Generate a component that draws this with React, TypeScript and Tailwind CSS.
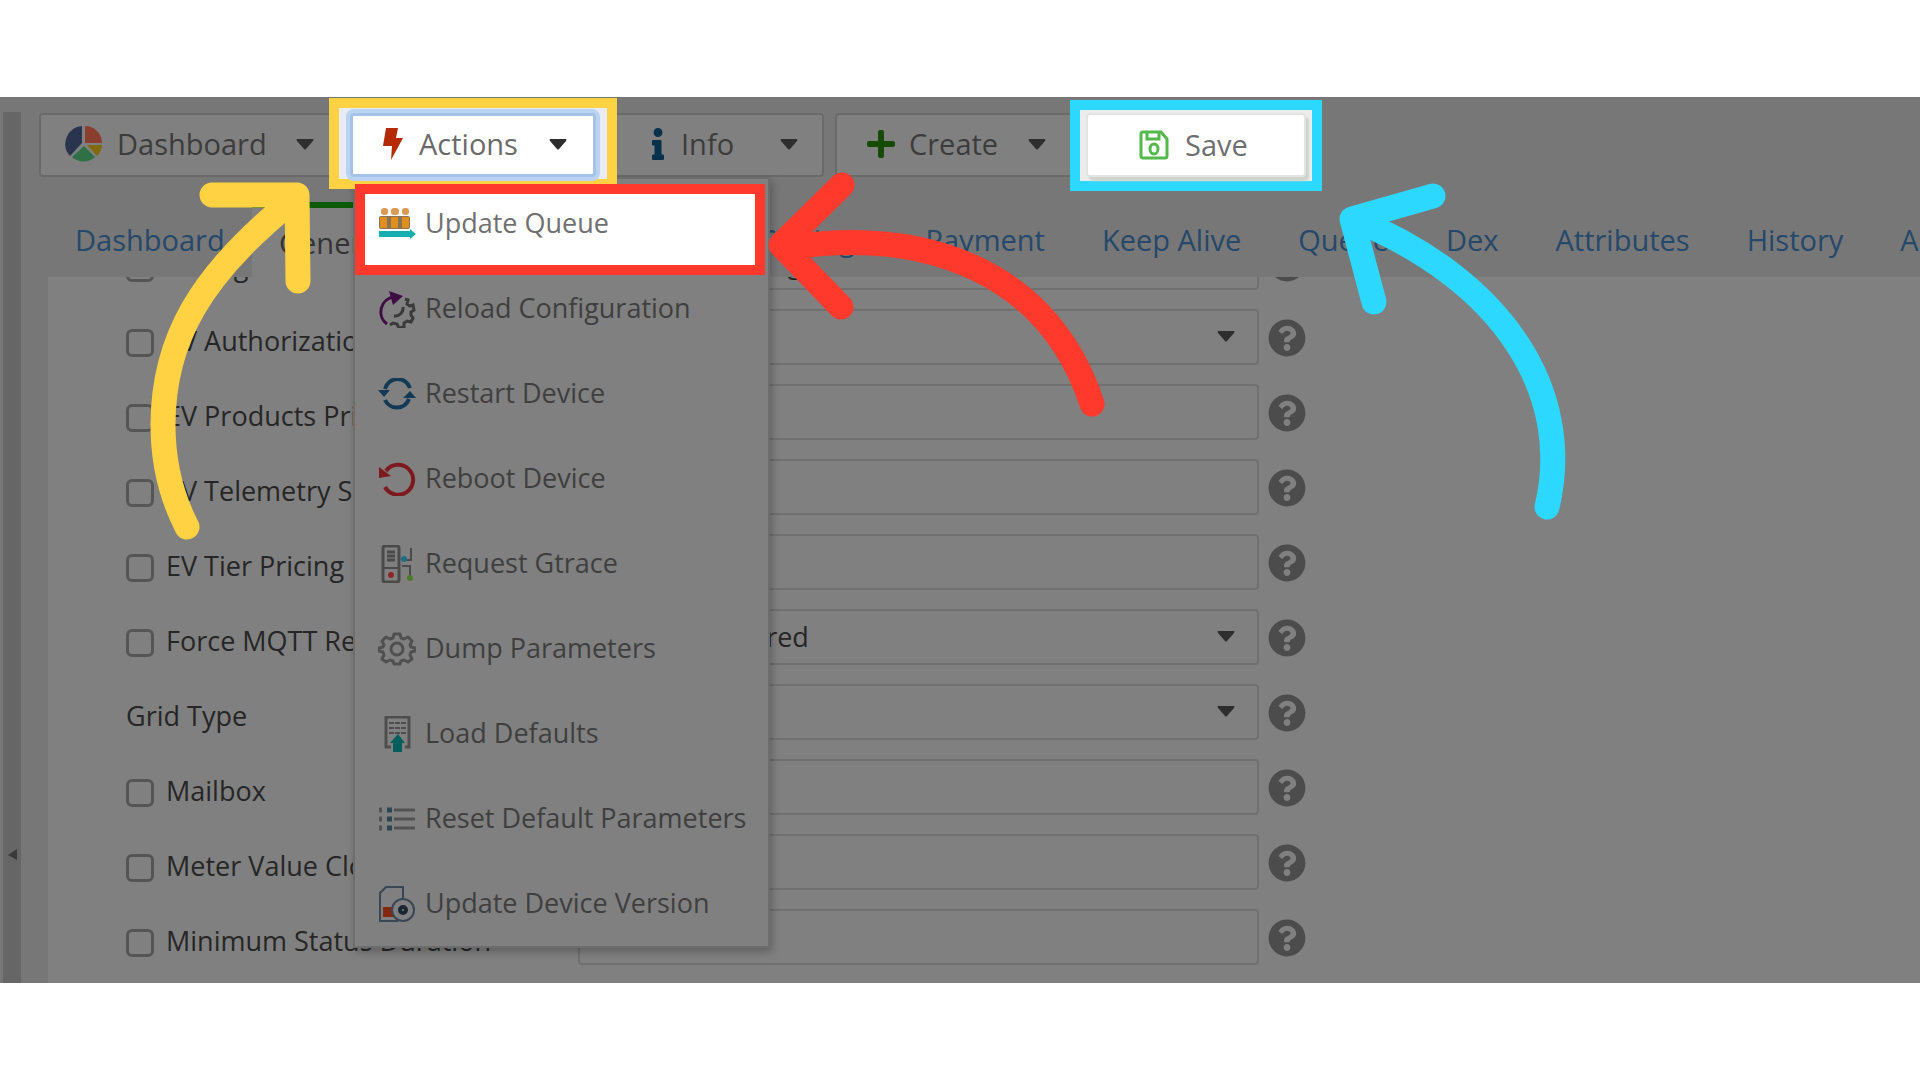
import React from 'react';
import { FaInfo, FaPlus, FaQuestionCircle } from 'react-icons/fa';

interface MenuEntry {
  label: string;
  icon: React.ReactNode;
}

interface Field {
  id: string;
  label: string;
  type: 'text' | 'select';
  checkbox: boolean;
  value?: string;
}

const PieIcon = () => (
  <svg viewBox="0 0 38 36" className="w-[38px] h-9">
    <path d="M17 0v17L5 30A18 18 0 0 1 17 0Z" fill="#2b344f" />
    <path d="M20 0a17 17 0 0 1 17 17H20Z" fill="#8a3f2e" />
    <path d="M22 19h15a16 16 0 0 1-5 11Z" fill="#80690f" />
    <path d="M19 20 30 31a17 17 0 0 1-23 0Z" fill="#2f7046" />
  </svg>
);

const BoltIcon = () => (
  <svg viewBox="0 0 20 32" className="w-5 h-8">
    <path d="M3 0h12l-2 10h7L8 32l1-14H0Z" fill="#b52a00" />
  </svg>
);

const SaveIcon = () => (
  <svg viewBox="0 0 30 30" className="w-[30px] h-[30px]" fill="none" stroke="#53b94a" strokeWidth="3">
    <path d="M2 4a2 2 0 0 1 2-2h18l6 7v17a2 2 0 0 1-2 2H4a2 2 0 0 1-2-2Z" />
    <path d="M8 2v7h12V2" />
    <ellipse cx="15" cy="19" rx="4" ry="5" />
  </svg>
);

const QueueIcon = () => (
  <svg viewBox="0 0 38 32" className="w-[38px] h-8">
    <g fill="#d99a55">
      <rect x="3" y="0" width="7" height="7" rx="3" />
      <rect x="13" y="0" width="8" height="7" rx="3" />
      <rect x="24" y="0" width="7" height="7" rx="3" />
    </g>
    <rect x="1" y="8" width="31" height="13" rx="2" fill="#8a7355" />
    <g fill="#e08e1f">
      <rect x="2" y="9" width="7" height="11" rx="1" />
      <rect x="13" y="9" width="7" height="11" rx="1" />
      <rect x="24" y="9" width="7" height="11" rx="1" />
    </g>
    <path d="M1 23h31v-2l6 5-6 5v-2H1Z" fill="#17aeb0" />
  </svg>
);

const ReloadIcon = () => (
  <svg viewBox="0 0 38 38" className="w-[38px] h-[38px]" fill="none">
    <path d="M9 34A15 15 0 0 1 16 7" stroke="#3f0d44" strokeWidth="3" />
    <path d="M11 1 25 6 15 15Z" fill="#3f0d44" />
    <path
      d="m27 9 3 1-1 4 3 2 3-1 1 5-3 2v3l2 3-2 4-4-1-3 2v4l-5 1-2-4-4-1-3 2"
      stroke="#3a3a3a"
      strokeWidth="3"
    />
    <path d="M25 17a8 8 0 0 1-9 9" stroke="#3a3a3a" strokeWidth="3" />
  </svg>
);

const RestartIcon = () => (
  <svg viewBox="0 0 38 32" className="w-[38px] h-8" fill="none">
    <path d="M7 11A13 13 0 0 1 32 10M31 21A13 13 0 0 1 7 22" stroke="#123a55" strokeWidth="4" />
    <path d="M0 12h12l-6 7ZM25 20h13l-6-7Z" fill="#123a55" />
  </svg>
);

const RebootIcon = () => (
  <svg viewBox="0 0 38 34" className="w-[38px] h-[34px]" fill="none">
    <path d="M8 9A15 15 0 1 1 7 25" stroke="#7d1a20" strokeWidth="4" />
    <path d="M1 5v11l12-2Z" fill="#7d1a20" />
  </svg>
);

const TraceIcon = () => (
  <svg viewBox="0 0 38 38" className="w-[38px] h-[38px]" fill="none" stroke="#4a4a4a" strokeWidth="2">
    <rect x="5" y="1" width="16" height="36" rx="2" strokeWidth="3" />
    <path d="M9 7h8M9 11h8M9 15h8" strokeWidth="3" />
    <path d="M6 23h14M33 3v12h-7M24 21h8v10" />
    <circle cx="13" cy="30" r="3" fill="#8e2727" stroke="none" />
    <circle cx="26" cy="14" r="3" fill="#1c6e80" stroke="none" />
    <circle cx="32" cy="33" r="3" fill="#4c7a2b" stroke="none" />
  </svg>
);

const GearIcon = () => (
  <svg viewBox="0 0 38 34" className="w-[38px] h-[34px]" fill="none" stroke="#505050" strokeWidth="3" strokeLinejoin="round">
    <path d="M16 2h6l1 4 3 1 4-2 4 4-2 4 1 2 4 1v3l-4 1-1 3 2 4-4 3-4-2-3 1-1 3h-6l-1-3-3-1-4 2-4-3 2-4-1-3-4-1v-3l4-1 1-2-2-4 4-4 4 2 3-1Z" />
    <circle cx="19" cy="17" r="6" />
  </svg>
);

const LoadIcon = () => (
  <svg viewBox="0 0 38 36" className="w-[38px] h-9" fill="none" stroke="#4e4e4e" strokeWidth="2">
    <path d="M13 31H8V1h23v30h-4" strokeWidth="3" />
    <path d="M11 7h17M11 12h17M11 17h17" strokeDasharray="5 1" />
    <path d="m20 18 7 9h-3v9h-9v-9h-3Z" fill="#035e5c" stroke="none" />
  </svg>
);

const ListIcon = () => (
  <svg viewBox="0 0 38 26" className="w-[38px] h-[26px]" stroke="#525252" strokeWidth="3">
    <path d="M16 4h21M16 13h21M16 22h21" />
    <path d="M1 4h3M1 13h3M1 22h3" strokeWidth="5" />
    <path d="M9 4h5M9 13h5M9 22h5" stroke="#2c4753" strokeWidth="5" />
  </svg>
);

const VersionIcon = () => (
  <svg viewBox="0 0 38 36" className="w-[38px] h-9" fill="none" stroke="#3a4654" strokeWidth="2">
    <path d="M20 35H2V7l6-6h17v11" />
    <path d="M5 21h12v10H5Z" fill="#84280f" stroke="none" />
    <circle cx="25" cy="24" r="11" fill="#808080" />
    <circle cx="25" cy="24" r="3" strokeWidth="4" stroke="#1b2533" />
  </svg>
);

const Caret = () => (
  <svg viewBox="0 0 18 11" className="w-[18px] h-[11px] shrink-0" fill="#2e2e2e">
    <path d="M1 0h16q1 0 0 2l-7 8q-1 1-2 0L1 2Q0 0 1 0Z" />
  </svg>
);

const menuEntries: MenuEntry[] = [
  { label: 'Reload Configuration', icon: <ReloadIcon /> },
  { label: 'Restart Device', icon: <RestartIcon /> },
  { label: 'Reboot Device', icon: <RebootIcon /> },
  { label: 'Request Gtrace', icon: <TraceIcon /> },
  { label: 'Dump Parameters', icon: <GearIcon /> },
  { label: 'Load Defaults', icon: <LoadIcon /> },
  { label: 'Reset Default Parameters', icon: <ListIcon /> },
  { label: 'Update Device Version', icon: <VersionIcon /> },
];

const fields: Field[] = [
  { id: 'debug-log', label: 'Debug Log', type: 'text', checkbox: true, value: 'Default Settings' },
  { id: 'ev-authorization', label: 'EV Authorization', type: 'select', checkbox: true },
  { id: 'ev-products', label: 'EV Products Prices', type: 'text', checkbox: true },
  { id: 'ev-telemetry', label: 'EV Telemetry Source', type: 'text', checkbox: true },
  { id: 'ev-tier', label: 'EV Tier Pricing', type: 'text', checkbox: true },
  { id: 'force-mqtt', label: 'Force MQTT Reset', type: 'select', checkbox: true, value: 'Not Configured' },
  { id: 'grid-type', label: 'Grid Type', type: 'select', checkbox: false },
  { id: 'mailbox', label: 'Mailbox', type: 'text', checkbox: true },
  { id: 'meter-value', label: 'Meter Value Clock', type: 'text', checkbox: true },
  { id: 'min-status', label: 'Minimum Status Duration', type: 'text', checkbox: true },
  { id: 'model', label: 'Model', type: 'text', checkbox: true },
];

const tabsAfterMenu = ['Settings', 'Payment', 'Keep Alive', 'Queue', 'Dex', 'Attributes', 'History', 'Alerts'];

const toolButton =
  'flex items-center h-16 pb-[2px] rounded-sm border-2 border-[#6a6a6a] bg-[#808080] text-[29px] text-[#3c3c3c] whitespace-nowrap';

const Toolbar = () => (
  <div className="flex gap-[11px] pt-4 pl-[18px]">
    <button type="button" className={`${toolButton} w-[300px] pl-6`}>
      <PieIcon />
      <span className="ml-[14px] flex-1 text-left">Dashboard</span>
      <span className="mr-[23px]"><Caret /></span>
    </button>

    <div className="relative z-20 w-[246px]">
      <div className="absolute z-10 -inset-x-[21px] -top-[15px] -bottom-3 border-[10px] border-[#ffd243] bg-[#e9ecf4]" />
      <button
        type="button"
        aria-haspopup="menu"
        className="relative z-20 flex items-center w-full h-16 pb-[2px] rounded-sm border-[3px] border-[#a3c3e8] bg-white text-[29px] text-[#6a6a6a] shadow-[0_0_0_4px_#b9d3f1]"
      >
        <span className="ml-[30px]"><BoltIcon /></span>
        <span className="ml-4 flex-1 text-left">Actions</span>
        <span className="mr-[26px]"><Caret /></span>
      </button>

      <div
        role="menu"
        className="absolute top-full left-[3px] w-[417px] pt-[2px] border-2 border-[#6d6d6d] bg-[#808080] shadow-[2px_4px_8px_rgba(0,0,0,0.25)] text-[27px] text-[#3f3f3f]"
      >
        <div className="relative z-20">
          <div className="absolute left-0 right-[3px] top-[3px] h-[91px] border-[10px] border-[#ff392b] bg-white" />
          <button type="button" role="menuitem" className="relative flex items-center w-full h-[85px] pl-[23px] text-[#707070]">
            <QueueIcon />
            <span className="ml-[9px]">Update Queue</span>
          </button>
        </div>
        {menuEntries.map((entry) => (
          <button key={entry.label} type="button" role="menuitem" className="flex items-center w-full h-[85px] pl-[23px] whitespace-nowrap">
            {entry.icon}
            <span className="ml-[9px]">{entry.label}</span>
          </button>
        ))}
      </div>
    </div>

    <button type="button" className={`${toolButton} w-[217px] pl-[38px]`}>
      <FaInfo className="w-[22px] h-8 text-[#08324b]" />
      <span className="ml-3 flex-1 text-left">Info</span>
      <span className="mr-[24px]"><Caret /></span>
    </button>

    <button type="button" className={`${toolButton} w-[240px] pl-[29px]`}>
      <FaPlus className="w-[30px] h-8 text-[#174a03]" />
      <span className="ml-[13px] flex-1 text-left">Create</span>
      <span className="mr-[27px]"><Caret /></span>
    </button>

    <div className="relative z-10 w-[220px]">
      <div className="absolute -inset-x-[16px] -top-[13px] -bottom-[14px] border-[10px] border-[#2dd8ff] bg-[#ececec]" />
      <button
        type="button"
        className="relative flex items-center w-full h-16 pl-[51px] rounded border-2 border-[#e4e4e4] bg-white text-[29px] text-[#6f6f6f] shadow-[3px_4px_2px_#cdd5cc]"
      >
        <SaveIcon />
        <span className="ml-4">Save</span>
      </button>
    </div>
  </div>
);

const Tabs = () => (
  <nav className="flex h-[75px] mt-[25px] ml-[27px] overflow-hidden text-[29px] text-[#26486a] whitespace-nowrap">
    <a href="#dashboard" className="flex items-center shrink-0 w-[204px] pl-[27px]">Dashboard</a>
    <a href="#general" aria-current="page" className="flex items-center shrink-0 w-[170px] pl-[27px] border-t-[6px] border-[#0b5c05] bg-[#808080] text-[#333]">
      General
    </a>
    <div className="w-[310px] shrink-0" />
    <div className="flex gap-[57px] pl-[29px]">
      {tabsAfterMenu.map((tab) => (
        <a key={tab} href={`#${tab}`} className="flex items-center shrink-0">
          {tab}
        </a>
      ))}
    </div>
  </nav>
);

const FieldRow: React.FC<{ field: Field }> = ({ field }) => (
  <div className="grid grid-cols-[452px_minmax(0,681px)_48px] h-14 items-center">
    <div className="flex items-center pt-2">
      {field.checkbox && (
        <input
          id={`${field.id}-on`}
          type="checkbox"
          aria-label={`Set ${field.label}`}
          className="appearance-none shrink-0 w-7 h-7 mt-1 mr-3 rounded-md border-[3px] border-[#555]"
        />
      )}
      <label htmlFor={field.id} className="text-[27px] text-[#262626] whitespace-nowrap">{field.label}</label>
    </div>
    {field.type === 'select' ? (
      <div className="relative">
        <select id={field.id} className="appearance-none w-full h-14 pl-9 rounded border-2 border-[#707070] bg-[#808080] text-[27px] text-[#262626]">
          <option>{field.value ?? ''}</option>
        </select>
        <span className="absolute right-6 top-[22px] pointer-events-none"><Caret /></span>
      </div>
    ) : (
      <input
        id={field.id}
        type="text"
        defaultValue={field.value}
        className="w-full h-14 pl-9 rounded border-2 border-[#707070] bg-[#808080] text-[27px] text-[#262626]"
      />
    )}
    <button type="button" aria-label={`Help for ${field.label}`} className="ml-[9px] pt-[2px]">
      <FaQuestionCircle className="w-[38px] h-[38px] text-[#4c4c4c]" />
    </button>
  </div>
);

const Arrows = () => (
  <svg className="absolute inset-0 z-30 w-full h-full pointer-events-none" fill="none" strokeWidth="25" strokeLinecap="round" strokeLinejoin="round">
    <g stroke="#ffd243">
      <path d="M187 527C168 490 163 455 163 425C163 340 200 275 293 200" />
      <path d="M212 195H297L298 281" />
    </g>
    <g stroke="#ff392b">
      <path d="M785 248C930 225 1050 275 1092 404" />
      <path d="M842 185L781 245L841 307" />
    </g>
    <g stroke="#2dd8ff">
      <path d="M1358 221C1500 280 1575 390 1547 507" />
      <path d="M1433 196L1352 219L1374 302" />
    </g>
  </svg>
);

const App = () => {
  return (
    <div className="relative flex flex-col justify-center h-screen overflow-hidden bg-white font-['Open_Sans','Noto_Sans',sans-serif]">
      <main className="flex h-[82vh] overflow-hidden bg-[#777]">
        <aside className="flex flex-col items-center shrink-0 w-[18px] ml-[3px] mt-[15px] bg-[#666]">
          <div className="grow-[6]" />
          <button type="button" aria-label="Collapse panel">
            <svg viewBox="0 0 9 11" className="w-[9px] h-[11px]" fill="#3a3a3a">
              <path d="M9 0v11L0 6Z" />
            </svg>
          </button>
          <div className="grow" />
        </aside>
        <div className="flex flex-col flex-1 min-w-0">
          <Toolbar />
          <Tabs />
          <section className="flex-1 min-h-0 ml-[27px] pl-[78px] overflow-hidden bg-[#808080]">
            <div className="flex flex-col gap-[19px] -mt-[43px]">
              {fields.map((field) => (
                <FieldRow key={field.id} field={field} />
              ))}
            </div>
          </section>
        </div>
      </main>
      <Arrows />
    </div>
  );
};

export default App;
